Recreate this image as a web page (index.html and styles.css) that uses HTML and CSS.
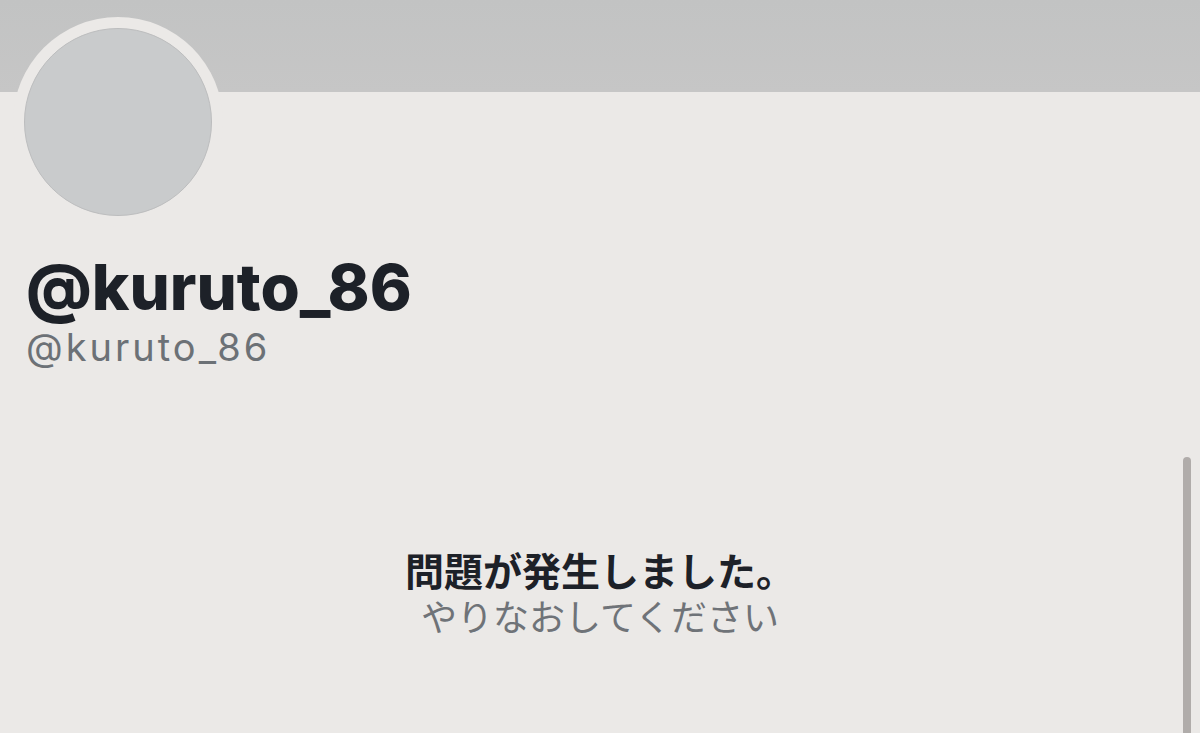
FILE: index.html
```html
<!DOCTYPE html>
<html lang="ja">

<head>
  <meta charset="UTF-8">
  <meta name="viewport" content="width=device-width, initial-scale=1.0">
  <title>@kuruto_86</title>
  <link rel="stylesheet" href="styles.css">
</head>

<body>
  <div class="banner"></div>

  <div class="profile">
    <div class="avatar-ring">
      <div class="avatar"></div>
    </div>
    <h1 class="display-name">@kuruto_86</h1>
    <p class="handle">@kuruto_86</p>
  </div>

  <div class="error">
    <p class="error-title">問題が発生しました。</p>
    <p class="error-retry">やりなおしてください</p>
  </div>

  <div class="scrollbar"></div>
</body>

</html>
```

FILE: styles.css
```css
body {
  margin: 0;
  padding: 0;
  background-color: #ebe9e7;
  font-family: Inter, "Liberation Sans", Arial, sans-serif;
  height: 733px;
  overflow: hidden;
}

.banner {
  height: 92px;
  background: linear-gradient(#c2c3c3, #c6c6c6);
}

.profile {
  padding-left: 26px;
}

.avatar-ring {
  width: 188px;
  height: 188px;
  margin-top: -75px;
  margin-left: -13px;
  padding: 11px;
  border-radius: 50%;
  background-color: #ebe9e7;
}

.avatar {
  width: 186px;
  height: 186px;
  border-radius: 50%;
  background-color: #c9cbcc;
  border: 1px solid #bcbdbe;
}

.display-name {
  margin: 26px 0 0;
  font-size: 63.5px;
  line-height: 67px;
  font-weight: 800;
  color: #1d2128;
}

.handle {
  margin: 8px 0 0;
  font-size: 38px;
  line-height: 38px;
  letter-spacing: 3px;
  color: #6c7176;
}

.error {
  margin-top: 180px;
  text-align: center;
  font-family: "Noto Sans CJK JP", sans-serif;
}

.error p {
  margin: 0;
}

.error-title {
  font-size: 39px;
  line-height: 46px;
  font-weight: bold;
  color: #1d2128;
}

.error-retry {
  margin-top: 2px;
  font-size: 36px;
  line-height: 46px;
  color: #6f7378;
}

.scrollbar {
  position: absolute;
  left: 1183px;
  top: 457px;
  width: 8px;
  height: 290px;
  border-radius: 4px;
  background-color: #b0acaa;
}
```
